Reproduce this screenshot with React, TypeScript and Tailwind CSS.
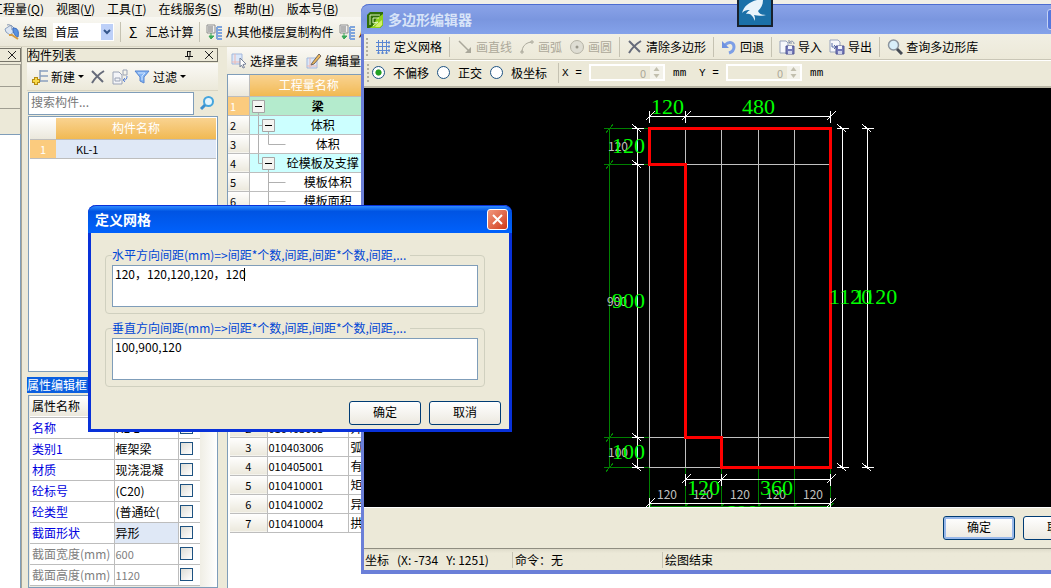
import type { ReactNode } from "react";
import clsx from "clsx";

const UI_FONT = "font-['Noto_Sans_CJK_SC','Liberation_Sans',sans-serif]";

interface IconProps {
  children: ReactNode;
}

function Icon({ children }: IconProps) {
  return (
    <svg
      width="16"
      height="16"
      viewBox="0 0 16 16"
      fill="none"
      className="shrink-0"
      aria-hidden="true"
    >
      {children}
    </svg>
  );
}

function BucketIcon() {
  return (
    <Icon>
      <path d="M1 5l6-4 5 5-6 5-4-3z" fill="#dde6f2" stroke="#8ba0c0" />
      <path d="M3 1c3-1 5 1 5 5" stroke="#8292ad" />
      <path d="M9 4c5 0 6 3 5 9-2 0-4-3-5-6z" fill="#5a92e0" stroke="#3a6cc0" />
      <path d="M5 11h3l6 4" stroke="#d69b41" strokeWidth="2" />
    </Icon>
  );
}

function ServerCopyIcon() {
  return (
    <Icon>
      <path d="M1 1h8v8H1z" fill="#f1f1f1" stroke="#8d8d8d" />
      <path d="M2 3h5M2 5h5M2 7h5" stroke="#777" />
      <path d="M5 9v3M3 12l2 3 3-3z" fill="#38a858" stroke="#38a858" />
      <path d="M11 3h5M11 6h5M11 9h5M11 12h5M11 15h5M11 3v12" stroke="#7fa5dc" strokeWidth="2" />
    </Icon>
  );
}

function NewIcon() {
  return (
    <Icon>
      <path d="M8 1v12M8 2h8M8 7h8M8 12h8" stroke="#8aa0bf" strokeWidth="1.500" />
      <path d="M4 8v8M0 12h8" stroke="#b58c14" strokeWidth="4" />
      <path d="M4 9v6M1 12h6" stroke="#f8d94a" strokeWidth="2" />
    </Icon>
  );
}

function CrossIcon() {
  return (
    <Icon>
      <path d="M2 2l11 11M14 2C9 5 5 9 2 14" stroke="#666b7a" strokeWidth="2" />
    </Icon>
  );
}

function CopyIcon() {
  return (
    <Icon>
      <path d="M1 3h6l3 3v9H1z" fill="#f3f4f8" stroke="#9aa3b5" />
      <path d="M3 9h5v3H3z" stroke="#9aa3b5" />
      <path d="M11 1h4v5h-4z" stroke="#9aa3b5" />
      <path d="M15 7c0 3-1 4-3 4m1-2l-2 2 2 2" stroke="#5b83d6" />
    </Icon>
  );
}

function FunnelIcon() {
  return (
    <Icon>
      <path d="M1 2h14L10 8v6l-4-2V8z" fill="#84b5f4" stroke="#5785cf" />
      <path d="M4 4h7L8 7v4" stroke="#cfe4ff" />
    </Icon>
  );
}

function SearchIcon() {
  return (
    <Icon>
      <circle cx="9.500" cy="6.500" r="4.500" fill="#e4f5fd" stroke="#45a5dd" strokeWidth="2" />
      <path d="M6 10l-4 4" stroke="#3b8fce" strokeWidth="3" />
    </Icon>
  );
}

function SelectTableIcon() {
  return (
    <Icon>
      <path d="M1 1h10v10H1z" fill="#dbe8fa" stroke="#a3b7dc" />
      <path d="M4 1v10M1 9h10" stroke="#eeb9b2" />
      <path d="M9 5l6 6-3 .5 1.500 3-1.500.5-1.500-3L9 14z" fill="#fff" stroke="#78839a" />
    </Icon>
  );
}

function EditTableIcon() {
  return (
    <Icon>
      <path d="M1 5h10v10H1z" fill="#dbe8fa" stroke="#a3b7dc" />
      <path d="M4 5v10M1 13h10" stroke="#eeb9b2" />
      <path d="M6 10l7-9 2 2-7 8-3 1z" fill="#edb95c" stroke="#75675b" />
    </Icon>
  );
}

function GridIcon() {
  return (
    <Icon>
      <path
        d="M3.500 1v14M7.500 1v14M11.500 1v14M1 3.500h14M1 7.500h14M1 11.500h14"
        stroke="#5b86d2"
      />
      <path d="M14 2v3M14 6v3M14 10v3M2 14h3M6 14h3M10 14h3" stroke="#5b86d2" />
    </Icon>
  );
}

function LineIcon() {
  return (
    <Icon>
      <path d="M2 2l11 11" stroke="#aaa89b" strokeWidth="1.500" />
      <path d="M14 8v6H8z" fill="#aaa89b" />
    </Icon>
  );
}

function ArcIcon() {
  return (
    <Icon>
      <path d="M3 13C3 8 6 4 12 3" stroke="#aaa89b" />
      <path d="M2 12h2v2H2zM12 2h2v2h-2z" stroke="#aaa89b" />
    </Icon>
  );
}

function CircleIcon() {
  return (
    <Icon>
      <circle cx="8" cy="8" r="6.500" fill="#deddd3" stroke="#b5b3a6" />
      <circle cx="8" cy="8" r="1.500" fill="#99978b" />
    </Icon>
  );
}

function UndoIcon() {
  return (
    <Icon>
      <path d="M4 6c4-4 9-3 9 2 0 3-2 5-5 6" stroke="#7d9fe6" strokeWidth="3" />
      <path d="M1 2v7h7z" fill="#6f92e0" />
    </Icon>
  );
}

function Disk() {
  return (
    <>
      <path d="M7 7h8v8H7z" fill="#7479b8" stroke="#535895" />
      <path d="M9 7h4v3H9z" fill="#f3f4fb" />
      <path d="M9 12h4v3H9z" fill="#cfd2ea" />
    </>
  );
}

function ImportIcon() {
  return (
    <Icon>
      <path d="M1 2h6l2 2v10H1z" fill="#f6f7fb" stroke="#97a3bd" />
      <path d="M10 4c2-3 5-2 5 1M10 1v3h3" stroke="#7e8ba8" />
      <Disk />
    </Icon>
  );
}

function ExportIcon() {
  return (
    <Icon>
      <path d="M1 1h8l2 2v10H1z" fill="#f6f7fb" stroke="#97a3bd" />
      <path d="M3 4v4h4M5 6l2 2-2 2" stroke="#5a6fa8" />
      <Disk />
    </Icon>
  );
}

function MagnifierIcon() {
  return (
    <Icon>
      <circle cx="6.500" cy="6" r="5" fill="#d9effa" stroke="#8b949e" strokeWidth="1.500" />
      <path d="M10 10l5 5" stroke="#454b55" strokeWidth="3" />
    </Icon>
  );
}

function AppIcon() {
  return (
    <Icon>
      <path d="M0 3l3-3h13v13l-3 3H0z" fill="#2f6f08" />
      <path d="M9 7l7-5v11l-3 3H2c4-1 6-5 7-9z" fill="#8ed01c" />
      <path d="M10 12l5-4v5l-2 2H8z" fill="#d3f06a" />
      <path d="M3 3v10M3 3h10M6 6v5l5-1-5 4M6 6h6" stroke="#dff3bd" />
    </Icon>
  );
}

function Separator() {
  return <span className="h-5 w-px shrink-0 bg-[#c5c2b2]" />;
}

function Grip() {
  return <span className="h-[18px] w-0 shrink-0 border-l-2 border-dotted border-[#b3b0a0]" />;
}

interface ToolProps {
  icon?: ReactNode;
  label: string;
  disabled?: boolean;
  menu?: boolean;
}

function Tool({ icon, label, disabled, menu }: ToolProps) {
  return (
    <button
      type="button"
      disabled={disabled}
      className={clsx(
        "flex shrink-0 items-center gap-[3px] whitespace-nowrap leading-4",
        disabled && "text-[#aca899]",
      )}
    >
      {icon}
      {label}
      {menu && (
        <span className="border-x-[3px] border-t-[3px] border-x-transparent border-t-black" />
      )}
    </button>
  );
}

const menus = [
  { label: "工程量", key: "Q" },
  { label: "视图", key: "V" },
  { label: "工具", key: "T" },
  { label: "在线服务", key: "S" },
  { label: "帮助", key: "H" },
  { label: "版本号", key: "B" },
];

function MenuBar() {
  return (
    <nav className="-ml-[9px] flex h-[17px] shrink-0 items-center gap-[12px]">
      {menus.map((menu) => (
        <button key={menu.key} type="button" className="whitespace-nowrap leading-4">
          {menu.label}(<u>{menu.key}</u>)
        </button>
      ))}
    </nav>
  );
}

function MainToolbar() {
  return (
    <div className="flex h-[30px] shrink-0 items-center gap-[6px] border-b border-[#d8d4c2] bg-linear-to-b from-[#f8f7f2] to-[#ebe8d8] pl-[4px]">
      <Tool icon={<BucketIcon />} label="绘图" />
      <div className="relative">
        <select
          aria-label="楼层"
          className="block h-[18px] w-[61px] appearance-none bg-white pl-[2px] leading-4"
        >
          <option>首层</option>
        </select>
        <span className="pointer-events-none absolute top-px right-px flex h-4 w-[12px] items-center justify-center bg-[#bdd0f8]">
          <svg width="8" height="6" viewBox="0 0 8 6" fill="none">
            <path d="M1 1l3 3 3-3" stroke="#35568c" strokeWidth="2" />
          </svg>
        </span>
      </div>
      <Separator />
      <button type="button" className="ml-[2px] flex items-center gap-[8px] leading-4">
        <span className="text-sm">Σ</span>
        汇总计算
      </button>
      <Separator />
      <Tool icon={<ServerCopyIcon />} label="从其他楼层复制构件" />
      <Tool icon={<ServerCopyIcon />} label="从其他图层复制" />
    </div>
  );
}

function CloseGlyph() {
  return (
    <svg width="8" height="8" viewBox="0 0 8 8" fill="none" aria-hidden="true">
      <path d="M0 0l8 8M8 0L0 8" stroke="#222" />
    </svg>
  );
}

function SidePanel() {
  return (
    <aside className="flex w-[22px] shrink-0 flex-col border-r border-[#a7a597]">
      <div className="mt-px flex h-[14px] items-center justify-end border border-l-0 border-[#77756a] pr-[4px]">
        <button type="button" aria-label="关闭导航">
          <CloseGlyph />
        </button>
      </div>
      <div className="mt-[2px] h-[22px] border-t border-r border-[#a09e92]" />
      <div className="h-[22px] border-t border-r border-[#a09e92]" />
      <div className="h-[26px] border-t border-r border-[#a09e92]" />
      <div className="flex-1 border-t border-r border-[#7f9db9] bg-white" />
    </aside>
  );
}

function ComponentList() {
  return (
    <section className="flex h-[325px] flex-col">
      <header className="mt-px flex h-[14px] items-center border border-[#77756a]">
        <h2 className="flex-1 leading-3">构件列表</h2>
        <button type="button" aria-label="固定" className="mr-3">
          <svg width="8" height="9" viewBox="0 0 8 9" fill="none">
            <path d="M2 .5h4M2.500 0v5M5 0v5M0 5.500h8M4 6v3" stroke="#111" />
          </svg>
        </button>
        <button type="button" aria-label="关闭构件列表" className="mr-1">
          <CloseGlyph />
        </button>
      </header>
      <div className="mt-px flex h-[27px] items-center gap-[6px] bg-linear-to-b from-[#faf9f5] to-[#ece9da] pl-[5px]">
        <Tool icon={<NewIcon />} label="新建" menu />
        <button type="button" aria-label="删除">
          <CrossIcon />
        </button>
        <button type="button" aria-label="复制">
          <CopyIcon />
        </button>
        <Tool icon={<FunnelIcon />} label="过滤" menu />
      </div>
      <div className="flex h-[25px] items-center gap-[5px] border-t border-[#d8d4c2]">
        <input
          aria-label="搜索构件"
          placeholder="搜索构件..."
          className="ml-px h-[23px] w-[166px] border border-[#7f9db9] bg-white px-[2px] pb-1 placeholder:text-[#777]"
        />
        <button type="button" aria-label="搜索">
          <SearchIcon />
        </button>
      </div>
      <div className="ml-px mt-px flex-1 border border-[#7f9db9] bg-white p-px">
        <table className="w-full table-fixed border-collapse leading-4">
          <thead>
            <tr className="h-[21px]">
              <th className="w-[26px] bg-linear-to-b from-white to-[#ebe8dc]" />
              <th className="bg-linear-to-b from-[#f9d390] to-[#f1b951] font-normal text-white">
                构件名称
              </th>
            </tr>
          </thead>
          <tbody>
            <tr className="h-[19px] border-y border-[#bdbdbd] bg-[#dfe8f6]">
              <td className="bg-[#fbcb7e] text-center text-[11px] text-white">1</td>
              <td className="pl-5 text-[11px]">KL-1</td>
            </tr>
          </tbody>
        </table>
      </div>
    </section>
  );
}

interface Property {
  name: string;
  value: string;
  readOnly?: boolean;
  active?: boolean;
}

const properties: Property[] = [
  { name: "名称", value: "KL-1" },
  { name: "类别1", value: "框架梁" },
  { name: "材质", value: "现浇混凝" },
  { name: "砼标号", value: "(C20)" },
  { name: "砼类型", value: "(普通砼(" },
  { name: "截面形状", value: "异形", active: true },
  { name: "截面宽度(mm)", value: "600", readOnly: true },
  { name: "截面高度(mm)", value: "1120", readOnly: true },
];

function PropertyEditor() {
  return (
    <section className="flex min-h-0 flex-1 flex-col pt-[5px]">
      <h2 className="h-4 bg-[#0a5fe0] leading-4 text-white">属性编辑框</h2>
      <div className="ml-px mt-[2px] min-h-0 flex-1 overflow-hidden border border-[#7f9db9] bg-linear-to-r from-[#eeece2] from-90% to-white pl-px">
        <table className="w-[170px] table-fixed border-collapse bg-white leading-4">
          <thead>
            <tr className="h-[21px] border-b border-[#bdbdbd] bg-linear-to-b from-white to-[#ebe8dc] text-left">
              <th className="w-[84px] pl-[2px] font-normal">属性名称</th>
              <th className="w-[64px] pl-[2px] font-normal">属性值</th>
              <th className="w-[22px]" />
            </tr>
          </thead>
          <tbody>
            {properties.map((property) => (
              <tr key={property.name} className="h-[21px] border-b border-[#bdbdbd]">
                <td
                  className={clsx(
                    "whitespace-nowrap border-r border-[#bdbdbd] pl-[2px]",
                    property.readOnly ? "text-[#808080]" : "text-[#0000e0]",
                  )}
                >
                  {property.name}
                </td>
                <td
                  className={clsx(
                    "whitespace-nowrap border-r border-[#bdbdbd] pl-px",
                    property.readOnly && "text-[11px] text-[#808080]",
                    property.active && "bg-[#dfe8f6]",
                  )}
                >
                  {property.value}
                </td>
                <td className="pl-px">
                  <input
                    type="checkbox"
                    aria-label={property.name}
                    className="block size-[13px] appearance-none border border-[#1d5281] bg-linear-to-br from-[#dddcd5] to-white"
                  />
                </td>
              </tr>
            ))}
          </tbody>
        </table>
      </div>
    </section>
  );
}

interface QuantityRow {
  label: string;
  // nesting level in the tree, 0 is the root
  depth: 0 | 1 | 2;
  // continues the guide line down to the next sibling
  more?: boolean;
}

const quantities: QuantityRow[] = [
  { label: "梁", depth: 0 },
  { label: "体积", depth: 1, more: true },
  { label: "体积", depth: 2 },
  { label: "砼模板及支撑", depth: 1 },
  { label: "模板体积", depth: 2, more: true },
  { label: "模板面积", depth: 2, more: true },
  { label: "支撑", depth: 2 },
];

function TreeGuide({ row, index }: { row: QuantityRow; index: number }) {
  const width = 18 + row.depth * 10;
  return (
    <svg
      width={width}
      height="18"
      viewBox={`0 0 ${width} 18`}
      fill="none"
      className="shrink-0"
      aria-hidden="true"
    >
      <g stroke="#b0b0b0">
        {row.depth === 0 && <path d="M8.500 14v4" />}
        {row.depth === 1 && (
          <path d={row.more ? "M8.500 0v18M8.500 9.500h4M18.500 14v4" : "M8.500 0v9.500h4M18.500 14v4"} />
        )}
        {row.depth === 2 && (
          <path d={row.more ? "M18.500 0v18M18.500 9.500h17" : "M18.500 0v9.500h17"} />
        )}
        {index === 2 && <path d="M8.500 0v18" />}
      </g>
      {row.depth < 2 && (
        <g transform={`translate(${2 + row.depth * 10} 3)`}>
          <path d="M.5.5h12v12H.5z" fill="#f4f4f1" stroke="#a5a5a5" />
          <path d="M3 6.500h7" stroke="#000" />
        </g>
      )}
    </svg>
  );
}

function QuantityTable() {
  return (
    <section className="h-[333px]">
      <div className="flex h-[27px] items-center gap-[8px] bg-linear-to-b from-[#faf9f5] to-[#ece9da] pl-[4px]">
        <Tool icon={<SelectTableIcon />} label="选择量表" />
        <Tool icon={<EditTableIcon />} label="编辑量表" />
      </div>
      <div className="h-[300px] border border-[#7f9db9] bg-white">
        <table className="w-[140px] table-fixed border-collapse leading-4">
          <thead>
            <tr className="h-[21px]">
              <th className="w-[21px] border-r border-[#bdbdbd] bg-linear-to-b from-white to-[#ebe8dc]" />
              <th className="bg-linear-to-b from-[#f9d390] to-[#f1b951] font-normal text-white">
                工程量名称
              </th>
            </tr>
          </thead>
          <tbody>
            {quantities.map((row, index) => (
              <tr key={index} className="h-[19px] border-y border-[#bdbdbd]">
                <td
                  className={clsx(
                    "border-r border-[#bdbdbd] pl-[2px] text-[11px]",
                    row.depth === 0
                      ? "bg-[#fbcb7e] text-white"
                      : "bg-linear-to-b from-white to-[#ebe8dc]",
                  )}
                >
                  {index + 1}
                </td>
                <td
                  className={clsx(
                    row.depth === 0 && "bg-[#b4ebcd] font-bold",
                    row.depth === 1 && "bg-[#ccffff]",
                  )}
                >
                  <div className="flex h-[18px] items-center">
                    <TreeGuide row={row} index={index} />
                    <span className="flex-1 whitespace-nowrap text-center">{row.label}</span>
                  </div>
                </td>
              </tr>
            ))}
          </tbody>
        </table>
      </div>
    </section>
  );
}

const codes = [
  { code: "010403002", name: "矩形梁" },
  { code: "010403003", name: "异形梁" },
  { code: "010403006", name: "弧形梁" },
  { code: "010405001", name: "有梁板" },
  { code: "010410001", name: "矩形柱" },
  { code: "010410002", name: "异形梁" },
  { code: "010410004", name: "拱形梁" },
];

function CodeTable() {
  return (
    <div className="min-h-0 flex-1 border-l border-[#7f9db9] bg-white pl-[2px]">
      <table className="w-[240px] table-fixed border-collapse leading-4">
        <thead>
          <tr className="h-[19px] bg-[#ebe8dc]">
            <th className="w-[37px]" />
            <th className="w-[81px] font-normal">编码</th>
            <th className="font-normal">名称</th>
          </tr>
        </thead>
        <tbody>
          {codes.map((item, index) => (
            <tr key={item.code} className="h-[19px] border-y border-[#bdbdbd]">
              <td className="border-r border-[#bdbdbd] bg-linear-to-b from-white to-[#ebe8dc] text-center text-[11px]">
                {index + 1}
              </td>
              <td className="border-r border-[#bdbdbd] pl-px text-[11px]">{item.code}</td>
              <td className="pl-[2px]">{item.name}</td>
            </tr>
          ))}
        </tbody>
      </table>
    </div>
  );
}

// drawing coordinates share the origin of the editor's screen area
const columns = [649.5, 685.5, 721.5, 758.5, 794.5, 830.5];
const rows = [128.5, 164.5, 437.5, 467.5];

function HorizontalDimension({ y, stops }: { y: number; stops: number[] }) {
  return (
    <g stroke="#fff">
      <path d={`M${stops[0]} ${y}H${stops[stops.length - 1]}`} />
      {stops.map((x) => (
        <path key={x} d={`M${x} ${y - 6}v12M${x - 4} ${y + 4}l9-9`} />
      ))}
    </g>
  );
}

function VerticalDimension({ x, stops }: { x: number; stops: number[] }) {
  return (
    <g stroke="#fff">
      <path d={`M${x} ${stops[0]}V${stops[stops.length - 1]}`} />
      {stops.map((y) => (
        <path key={y} d={`M${x - 6} ${y}h12M${x - 5} ${y - 4}l9 8`} />
      ))}
    </g>
  );
}

const smallLabels = [
  { x: 608, y: 151, text: "120" },
  { x: 607, y: 306, text: "900" },
  { x: 608, y: 457, text: "100" },
  { x: 657, y: 499, text: "120" },
  { x: 693, y: 499, text: "120" },
  { x: 730, y: 499, text: "120" },
  { x: 766, y: 499, text: "120" },
  { x: 803, y: 499, text: "120" },
];

const largeLabels = [
  { x: 651, y: 114, text: "120" },
  { x: 742, y: 114, text: "480" },
  { x: 612, y: 153, text: "120" },
  { x: 612, y: 308, text: "900" },
  { x: 612, y: 459, text: "100" },
  { x: 829, y: 304, text: "1120" },
  { x: 854, y: 304, text: "1120" },
  { x: 687, y: 495, text: "120" },
  { x: 760, y: 495, text: "360" },
  { x: 725, y: 520, text: "600" },
];

function Drawing() {
  return (
    <svg
      width="752"
      height="419"
      viewBox="364 88 752 419"
      fill="none"
      className="block"
      shapeRendering="crispEdges"
    >
      <g stroke="#008000">
        <path d="M609.500 128.500V467.500M649.500 506.500H830.500" />
        {rows.map((y) => (
          <path key={y} d={`M604 ${y}H649M606 ${y + 4}l7-8`} />
        ))}
        {columns.map((x) => (
          <path key={x} d={`M${x} 467V507M${x - 3} 509l6-6`} />
        ))}
      </g>
      <g stroke="#c0c0c0">
        {columns.map((x) => (
          <path key={x} d={`M${x} 128V467`} />
        ))}
        {rows.map((y) => (
          <path key={y} d={`M649 ${y}H831`} />
        ))}
      </g>
      <HorizontalDimension y={116.5} stops={[649.5, 685.5, 830.5]} />
      <HorizontalDimension y={479.5} stops={[685.5, 721.5, 830.5]} />
      <HorizontalDimension y={503.5} stops={[649.5, 830.5]} />
      <VerticalDimension x={637.5} stops={rows} />
      <VerticalDimension x={842.5} stops={[128.5, 467.5]} />
      <VerticalDimension x={867.5} stops={[128.5, 467.5]} />
      <g fill="#c0c0c0" className="text-xs">
        {smallLabels.map((label) => (
          <text key={`${label.x}-${label.y}`} x={label.x} y={label.y}>
            {label.text}
          </text>
        ))}
      </g>
      <path
        d="M649.500 128.500H830.500V467.500H721.500V437.500H685.500V164.500H649.500Z"
        stroke="#f00"
        strokeWidth="3"
      />
      <g fill="#0f0" className="font-['Liberation_Serif',serif] text-[22px]">
        {largeLabels.map((label) => (
          <text key={`${label.x}-${label.y}`} x={label.x} y={label.y}>
            {label.text}
          </text>
        ))}
      </g>
    </svg>
  );
}

function OffsetOption({ label, checked }: { label: string; checked?: boolean }) {
  return (
    <label className="flex shrink-0 items-center gap-[8px] whitespace-nowrap leading-4">
      <input
        type="radio"
        name="offset"
        defaultChecked={checked}
        className="size-[13px] appearance-none rounded-full border border-[#1d5281] bg-white checked:bg-radial checked:from-[#21a121] checked:from-35% checked:to-white checked:to-45%"
      />
      {label}
    </label>
  );
}

function OffsetInput({ label }: { label: string }) {
  return (
    <div className="flex shrink-0 items-center gap-2 leading-4">
      <label className="flex items-center gap-[8px] whitespace-pre">
        <span className="w-[19px] font-['Liberation_Mono',monospace] text-[11px]">{label} =</span>
        <span className="flex h-[17px] w-[76px] border-2 border-white">
          <input
            disabled
            defaultValue="0"
            className="w-[58px] flex-1 pr-1 text-right text-[11px] text-[#aca899]"
          />
          <svg width="13" height="13" viewBox="0 0 13 13" className="bg-[#f3f2ea]">
            <path d="M6.500 1l3 4h-6zM6.500 12l3-4h-6z" fill="#c2bfae" />
          </svg>
        </span>
      </label>
      <span className="w-[13px] font-['Liberation_Mono',monospace] text-[11px]">mm</span>
    </div>
  );
}

interface DialogButtonProps {
  children: ReactNode;
  isDefault?: boolean;
}

function DialogButton({ children, isDefault }: DialogButtonProps) {
  return (
    <button
      type="button"
      className={clsx(
        "h-6 w-[72px] rounded-[3px] border border-[#003c74] bg-linear-to-b from-white to-[#ece9e0] pb-[2px] leading-4",
        isDefault && "inset-ring-2 inset-ring-[#98b8ea]",
      )}
    >
      {children}
    </button>
  );
}

function PolygonEditor() {
  return (
    <section className="absolute top-1 -right-[69px] left-[361px] flex flex-col rounded-t-lg border-x-3 border-b-4 border-[#6b7fd8] bg-[#ece9d8]">
      <header className="-mx-[3px] flex h-[30px] items-center gap-[5px] rounded-t-lg border-t border-[#4d6dd0] bg-linear-to-b from-[#8aa3e8] via-[#7a96df] to-[#84a2ea] pr-[6px] pl-[6px]">
        <AppIcon />
        <h1 className="flex-1 pb-[2px] text-sm font-bold text-[#d8e4f8]">多边形编辑器</h1>
        <div className="flex gap-[2px]">
          <button type="button" aria-label="最小化" className="size-[21px] rounded-[3px] border border-[#c4d2f5] bg-[#5678dc]" />
          <button type="button" aria-label="最大化" className="size-[21px] rounded-[3px] border border-[#c4d2f5] bg-[#5678dc]" />
          <button type="button" aria-label="关闭" className="size-[21px] rounded-[3px] border border-[#c4d2f5] bg-[#b5616e]" />
        </div>
      </header>
      <div className="flex h-[26px] items-center gap-[7px] border-b border-[#c9c6b6] bg-linear-to-b from-[#f1efe4] to-[#ece9d8] pl-[2px]">
        <Grip />
        <Tool icon={<GridIcon />} label="定义网格" />
        <Separator />
        <Tool icon={<LineIcon />} label="画直线" disabled />
        <Tool icon={<ArcIcon />} label="画弧" disabled />
        <Tool icon={<CircleIcon />} label="画圆" disabled />
        <Separator />
        <Tool icon={<CrossIcon />} label="清除多边形" />
        <Separator />
        <Tool icon={<UndoIcon />} label="回退" />
        <Separator />
        <Tool icon={<ImportIcon />} label="导入" />
        <Tool icon={<ExportIcon />} label="导出" />
        <Separator />
        <Tool icon={<MagnifierIcon />} label="查询多边形库" />
      </div>
      <div className="flex h-[28px] items-center border-t border-b-2 border-t-white border-b-[#bab7a6] pb-[2px] pl-[3px]">
        <Grip />
        <fieldset className="ml-[3px] flex items-center gap-[8px]">
          <OffsetOption label="不偏移" checked />
          <OffsetOption label="正交" />
          <OffsetOption label="极坐标" />
        </fieldset>
        <div className="ml-[11px] flex items-center gap-[3px]">
          <Separator />
          <div className="flex items-center gap-[13px]">
            <OffsetInput label="X" />
            <OffsetInput label="Y" />
          </div>
        </div>
      </div>
      <div className="overflow-hidden bg-black">
        <Drawing />
      </div>
      <div className="flex h-[42px] items-center justify-end gap-2 border-t border-b border-t-white border-b-[#8f8d80] pr-[22px]">
        <DialogButton isDefault>确定</DialogButton>
        <DialogButton>取消</DialogButton>
      </div>
      <footer className="flex h-[21px] items-center bg-linear-to-b from-[#dfdccb] to-[#ece9d8] to-20% leading-4">
        <span className="flex w-[148px] gap-2 whitespace-nowrap pl-px">
          <span>坐标</span>
          <span>(X: -734</span>
          <span>Y: 1251)</span>
        </span>
        <span className="w-[150px] border-l border-[#c5c2b2] pl-[2px]">命令：无</span>
        <span className="border-l border-[#c5c2b2] pl-[2px]">绘图结束</span>
      </footer>
    </section>
  );
}

interface SpacingFieldProps {
  label: string;
  value: string;
  caret?: boolean;
}

function SpacingField({ label, value, caret }: SpacingFieldProps) {
  return (
    <fieldset className="relative rounded-[4px] border border-[#d0d0bf] px-[6px] pt-[2px] pb-[6px]">
      <legend className="h-4 whitespace-nowrap pr-1 leading-4 text-[#0046d5]">{label}</legend>
      <textarea
        aria-label={label}
        defaultValue={value}
        className="block h-[42px] w-full resize-none border border-[#7f9db9] bg-white px-[2px] leading-4"
      />
      {caret && <span className="pointer-events-none absolute top-[5px] left-[138px] h-[13px] w-px bg-black" />}
    </fieldset>
  );
}

function GridDialog() {
  return (
    <section
      role="dialog"
      aria-labelledby="grid-title"
      className="absolute top-[205px] left-[88px] w-[424px] rounded-t-lg border-x-3 border-b-3 border-[#0831d9] bg-[#ece9d8]"
    >
      <header className="-mx-[3px] flex h-[28px] items-center rounded-t-lg border-t border-[#0831d9] bg-linear-to-b from-[#2f8bff] via-[#0054e3] via-20% to-[#0061fc] pr-[4px] pl-[7px]">
        <h2 id="grid-title" className="flex-1 pb-[2px] text-sm font-bold text-white">
          定义网格
        </h2>
        <button
          type="button"
          aria-label="关闭"
          className="flex size-[21px] items-center justify-center rounded-[3px] border border-white bg-linear-to-br from-[#f0967c] to-[#cf3610]"
        >
          <svg width="11" height="11" viewBox="0 0 11 11" fill="none">
            <path d="M1 1l9 9M10 1l-9 9" stroke="#fff" strokeWidth="2" />
          </svg>
        </button>
      </header>
      <div className="flex flex-col gap-[6px] pt-[14px] pr-[24px] pl-[14px]">
        <SpacingField
          label="水平方向间距(mm)=>间距*个数,间距,间距*个数,间距,..."
          value="120，120,120,120，120"
          caret
        />
        <SpacingField
          label="垂直方向间距(mm)=>间距*个数,间距,间距*个数,间距,..."
          value="100,900,120"
        />
      </div>
      <div className="flex justify-end gap-2 pt-[14px] pr-[8px] pb-[4px]">
        <DialogButton>确定</DialogButton>
        <DialogButton>取消</DialogButton>
      </div>
    </section>
  );
}

function SwallowBadge() {
  return (
    <div className="absolute top-0 left-[737px] border-2 border-t-0 border-[#17222e] bg-[#1b70a8]">
      <svg width="32" height="25" viewBox="0 0 32 25" aria-hidden="true">
        <path
          d="M18 0C10 2 5 6 3 13c3-3 5-3 8-3-2 1-3 2-4 4 3-1 5 0 7 3l2 4c0-3 0-4-1-6 4 1 8 1 12 0-4 0-7-1-8-4 3-3 5-6 5-11z"
          fill="#e9f4fb"
        />
      </svg>
    </div>
  );
}

export default function App() {
  return (
    <main
      className={clsx(
        "relative flex h-screen w-full flex-col overflow-hidden bg-[#f1efe6] text-xs text-black",
        UI_FONT,
      )}
    >
      <MenuBar />
      <MainToolbar />
      <div className="flex min-h-0 flex-1 bg-[#ece9d8]">
        <SidePanel />
        <div className="ml-[5px] flex w-[191px] shrink-0 flex-col">
          <ComponentList />
          <PropertyEditor />
        </div>
        <div className="ml-[9px] flex min-w-0 flex-1 flex-col">
          <QuantityTable />
          <CodeTable />
        </div>
      </div>
      <PolygonEditor />
      <GridDialog />
      <SwallowBadge />
    </main>
  );
}
